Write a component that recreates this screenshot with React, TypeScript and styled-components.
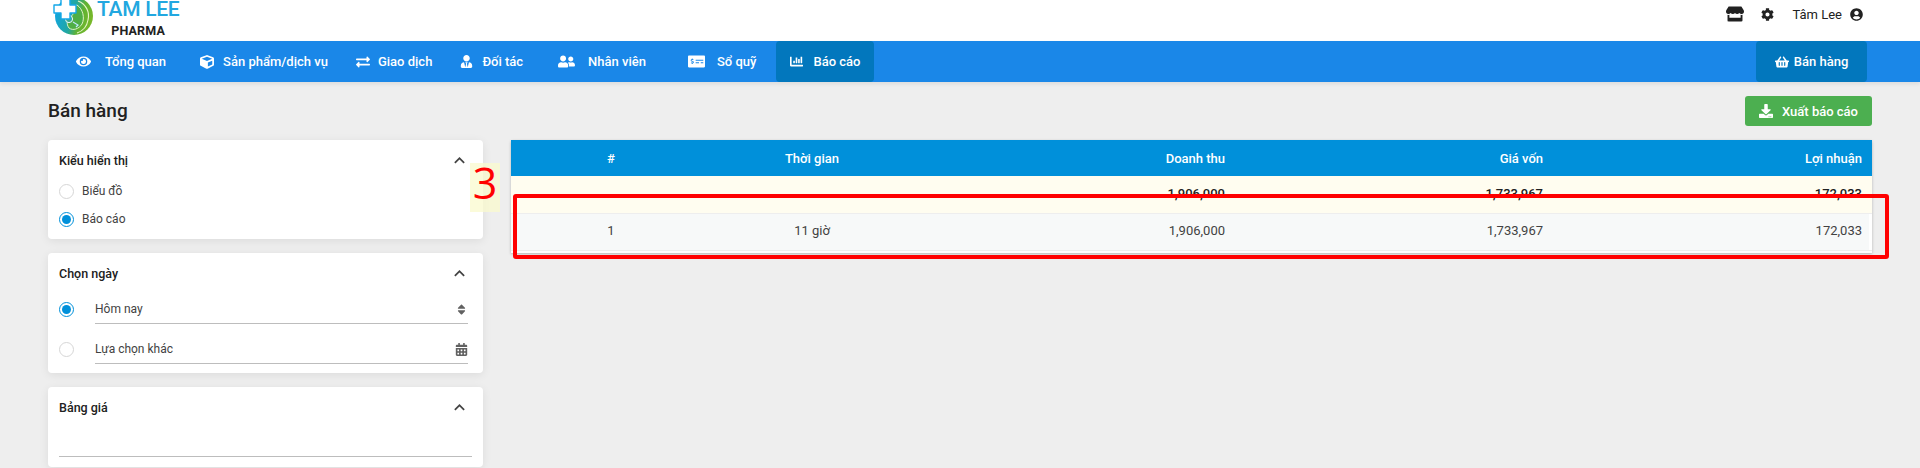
import React from "react";
import styled, { createGlobalStyle } from "styled-components";
import {
  FaEye, FaCube, FaExchangeAlt, FaUserTie, FaUserFriends, FaMoneyCheckAlt, FaChartBar,
  FaShoppingBasket, FaStore, FaCog, FaUserCircle, FaDownload, FaSort, FaCalendarAlt,
} from "react-icons/fa";
import { MdExpandLess } from "react-icons/md";

const Global = createGlobalStyle`
  html, body { margin: 0; padding: 0; height: 468px; overflow: hidden; background: #eeeeee; }
  * { box-sizing: border-box; }
  body { font-family: Roboto, "Liberation Sans", sans-serif; color: #212121; }
`;

const Page = styled.div`
  position: relative;
  width: 1920px;
  height: 468px;
  overflow: hidden;
`;

const TopBar = styled.header`
  height: 41px;
  background: #fff;
  display: flex;
  align-items: flex-start;
  justify-content: space-between;
  padding: 0 57px 0 53px;
  overflow: hidden;
`;

const Brand = styled.div`
  display: flex;
  align-items: flex-start;
  gap: 4px;
`;

const LogoMark = styled.svg`
  width: 40px;
  height: 36px;
  flex: none;
`;

const BrandText = styled.div`
  display: flex;
  flex-direction: column;
  align-items: center;
`;

const BrandName = styled.div`
  font-size: 21px;
  font-weight: 500;
  line-height: 18px;
  letter-spacing: -0.3px;
  color: #22a7e0;
  white-space: nowrap;
`;

const BrandSub = styled.div`
  font-size: 12.5px;
  font-weight: 700;
  line-height: 14px;
  margin-top: 6px;
  color: #222;
  letter-spacing: 0.2px;
`;

const UserArea = styled.div`
  height: 28px;
  display: flex;
  align-items: center;
  font-size: 13px;
  color: #212121;
`;

const StoreIcon = styled(FaStore)`
  font-size: 18px;
  margin-right: 17px;
`;

const CogIcon = styled(FaCog)`
  font-size: 13px;
  margin-right: 18px;
`;

const UserName = styled.span`
  margin-right: 8px;
`;

const NavBar = styled.nav`
  height: 41px;
  background: #1a87e8;
  display: flex;
  align-items: stretch;
  justify-content: space-between;
  padding: 0 53px 0 62px;
  box-shadow: 0 2px 4px rgba(0, 0, 0, 0.08);
  position: relative;
`;

const NavList = styled.div`
  display: flex;
  align-items: stretch;
`;

const NavItem = styled.a<{ $ml?: number; $gap: number; $active?: boolean }>`
  display: flex;
  align-items: center;
  gap: ${(p) => p.$gap}px;
  margin-left: ${(p) => p.$ml ?? 0}px;
  padding: 0 14px;
  color: #fff;
  font-size: 13px;
  font-weight: 500;
  white-space: nowrap;
  border-radius: 4px;
  background: ${(p) => (p.$active ? "#0277bd" : "transparent")};
  svg { flex: none; }
`;

const SellButton = styled.a`
  width: 111px;
  display: flex;
  align-items: center;
  justify-content: center;
  gap: 5px;
  color: #fff;
  font-size: 13px;
  font-weight: 500;
  border-radius: 4px;
  background: #0277bd;
`;

const Content = styled.main`
  padding: 14px 48px 0;
`;

const TitleRow = styled.div`
  height: 30px;
  display: flex;
  align-items: center;
  justify-content: space-between;
`;

const Title = styled.h1`
  margin: 0 0 2px;
  font-size: 19px;
  font-weight: 500;
  color: #212121;
`;

const ExportButton = styled.a`
  width: 127px;
  height: 30px;
  background: #4caf50;
  color: #fff;
  font-size: 13px;
  font-weight: 500;
  border-radius: 3px;
  display: flex;
  align-items: center;
  justify-content: center;
  gap: 9px;
`;

const Columns = styled.div`
  display: flex;
  gap: 28px;
  margin-top: 14px;
  align-items: flex-start;
`;

const Sidebar = styled.aside`
  width: 435px;
  flex: none;
  display: flex;
  flex-direction: column;
  gap: 14px;
`;

const Card = styled.section<{ $h: number }>`
  height: ${(p) => p.$h}px;
  background: #fff;
  border-radius: 4px;
  box-shadow: 0 2px 10px rgba(0, 0, 0, 0.08);
  padding: 11px 11px 0;
`;

const CardHead = styled.div`
  height: 18px;
  display: flex;
  align-items: center;
  justify-content: space-between;
  padding-right: 2px;
`;

const CardTitle = styled.h3`
  margin: 0;
  font-size: 12.5px;
  font-weight: 500;
  color: #212121;
`;

const Chevron = styled(MdExpandLess)`
  font-size: 21px;
  color: #424242;
`;

const RadioRow = styled.label`
  height: 28px;
  display: flex;
  align-items: center;
  gap: 8px;
  font-size: 12px;
  color: #424242;
`;

const RadioList = styled.div`
  margin-top: 8px;
`;

const Radio = styled.span<{ $on?: boolean }>`
  width: 15px;
  height: 15px;
  flex: none;
  border-radius: 50%;
  border: 1px solid ${(p) => (p.$on ? "#0090da" : "#d6d6d6")};
  display: flex;
  align-items: center;
  justify-content: center;
  &::after {
    content: "";
    width: 9px;
    height: 9px;
    border-radius: 50%;
    background: ${(p) => (p.$on ? "#0090da" : "transparent")};
  }
`;

const FieldRadio = styled(Radio)`
  margin-bottom: 7px;
`;

const FieldRow = styled.div`
  height: 40px;
  display: flex;
  align-items: flex-end;
  gap: 21px;
`;

const FieldList = styled.div`
  margin-top: 2px;
`;

const Field = styled.div`
  flex: 1;
  height: 29px;
  margin-right: 4px;
  border-bottom: 1px solid #bdbdbd;
  display: flex;
  align-items: center;
  justify-content: space-between;
  font-size: 12px;
  color: #424242;
  svg { color: #616161; font-size: 13px; }
`;

const EmptySelect = styled.div`
  height: 41px;
  border-bottom: 1px solid #bdbdbd;
`;

const TableCard = styled.div`
  width: 1361px;
  flex: none;
  height: 113px;
  background: #fff;
  border-radius: 2px 2px 0 0;
  box-shadow: 0 1px 3px rgba(0, 0, 0, 0.25);
`;

const Table = styled.table`
  width: 100%;
  border-collapse: collapse;
  table-layout: fixed;
  font-size: 13px;
`;

const HeadCell = styled.th<{ $align?: string }>`
  height: 36px;
  background: #0090da;
  color: #fff;
  font-weight: 500;
  padding: 0 10px;
  text-align: ${(p) => p.$align ?? "right"};
`;

const TotalCell = styled.td`
  height: 37px;
  background: #fffdf0;
  font-weight: 500;
  color: #212121;
  text-align: right;
  padding: 0 10px 2px;
  border-bottom: 1px solid #eee;
`;

const BodyCell = styled.td<{ $align?: string }>`
  height: 37px;
  background: #f7f9f9;
  color: #424242;
  text-align: ${(p) => p.$align ?? "right"};
  padding: 0 10px 2px;
  border-bottom: 1px solid #eee;
  &:last-child { box-shadow: inset -3px 0 0 #fff; }
`;

const NoteBadge = styled.div`
  position: absolute;
  left: 470px;
  top: 163px;
  width: 30px;
  height: 49px;
  background: rgba(250, 250, 205, 0.75);
  color: #ff0000;
  font-family: "Open Sans", sans-serif;
  font-size: 43px;
  line-height: 39px;
  text-align: center;
`;

const Highlight = styled.div`
  position: absolute;
  left: 513px;
  top: 194px;
  width: 1376px;
  height: 65px;
  border: 4px solid #ff0000;
  border-radius: 3px;
`;

const Logo = () => (
  <LogoMark viewBox="0 0 40 36">
    <defs>
      <linearGradient id="lg" x1="0" y1="0.2" x2="1" y2="0.5">
        <stop offset="0" stopColor="#0ea5ea" />
        <stop offset="0.5" stopColor="#22a7a0" />
        <stop offset="0.72" stopColor="#5fb232" />
        <stop offset="1" stopColor="#78b82a" />
      </linearGradient>
    </defs>
    <circle cx="21" cy="16" r="19" fill="url(#lg)" />
    <path d="M25 1c8 3 12 11 10 19-1 6-5 11-11 13" fill="none" stroke="#e6f5c8" strokeWidth="1.1" />
    <path d="M24 5c-3 1-5 4-4 8 0 2-1 3-3 4-3 2-4 7-1 11 4 3 10 1 13-4 3-6 1-15-5-19z" fill="#4fae46" stroke="#dff2c4" strokeWidth="1" />
    <circle cx="16" cy="19" r="3.6" fill="#3aa890" stroke="#eaf8ff" strokeWidth="1" />
    <path d="M20 22l5 3-2 2" fill="none" stroke="#bfe8ff" strokeWidth="1.2" />
    <path d="M1 5h7v-6h9v6h6v8h-6v6H8v-6H1z" fill="#fff" stroke="#15a8e8" strokeWidth="1.4" strokeLinejoin="round" />
  </LogoMark>
);

const rows = ["1,906,000", "1,733,967", "172,033"];

export default function App() {
  return (
    <Page>
      <Global />
      <TopBar>
        <Brand>
          <Logo />
          <BrandText>
            <BrandName>TAM LEE</BrandName>
            <BrandSub>PHARMA</BrandSub>
          </BrandText>
        </Brand>
        <UserArea>
          <StoreIcon />
          <CogIcon />
          <UserName>Tâm Lee</UserName>
          <FaUserCircle size={13} />
        </UserArea>
      </TopBar>
      <NavBar>
        <NavList>
          <NavItem $gap={14}><FaEye size={15} />Tổng quan</NavItem>
          <NavItem $ml={6} $gap={9}><FaCube size={14} />Sản phẩm/dịch vụ</NavItem>
          <NavItem $gap={8}><FaExchangeAlt size={14} />Giao dịch</NavItem>
          <NavItem $gap={9}><FaUserTie size={13} />Đối tác</NavItem>
          <NavItem $ml={7} $gap={13}><FaUserFriends size={17} />Nhân viên</NavItem>
          <NavItem $ml={14} $gap={12}><FaMoneyCheckAlt size={17} />Sổ quỹ</NavItem>
          <NavItem $ml={6} $gap={10} $active><FaChartBar size={13} />Báo cáo</NavItem>
        </NavList>
        <SellButton><FaShoppingBasket size={14} />Bán hàng</SellButton>
      </NavBar>
      <Content>
        <TitleRow>
          <Title>Bán hàng</Title>
          <ExportButton><FaDownload size={14} />Xuất báo cáo</ExportButton>
        </TitleRow>
        <Columns>
          <Sidebar>
            <Card $h={99}>
              <CardHead><CardTitle>Kiểu hiển thị</CardTitle><Chevron /></CardHead>
              <RadioList>
                <RadioRow><Radio />Biểu đồ</RadioRow>
                <RadioRow><Radio $on />Báo cáo</RadioRow>
              </RadioList>
            </Card>
            <Card $h={120}>
              <CardHead><CardTitle>Chọn ngày</CardTitle><Chevron /></CardHead>
              <FieldList>
                <FieldRow><FieldRadio $on /><Field>Hôm nay<FaSort /></Field></FieldRow>
                <FieldRow><FieldRadio /><Field>Lựa chọn khác<FaCalendarAlt /></Field></FieldRow>
              </FieldList>
            </Card>
            <Card $h={80}>
              <CardHead><CardTitle>Bảng giá</CardTitle><Chevron /></CardHead>
              <EmptySelect />
            </Card>
          </Sidebar>
          <TableCard>
            <Table>
              <colgroup>
                <col width="200" />
                <col width="202" />
                <col width="322" />
                <col width="318" />
                <col width="319" />
              </colgroup>
              <thead>
                <tr>
                  <HeadCell $align="center">#</HeadCell>
                  <HeadCell $align="center">Thời gian</HeadCell>
                  <HeadCell>Doanh thu</HeadCell>
                  <HeadCell>Giá vốn</HeadCell>
                  <HeadCell>Lợi nhuận</HeadCell>
                </tr>
              </thead>
              <tbody>
                <tr>
                  <TotalCell />
                  <TotalCell />
                  {rows.map((v) => <TotalCell key={v}>{v}</TotalCell>)}
                </tr>
                <tr>
                  <BodyCell $align="center">1</BodyCell>
                  <BodyCell $align="center">11 giờ</BodyCell>
                  {rows.map((v) => <BodyCell key={v}>{v}</BodyCell>)}
                </tr>
              </tbody>
            </Table>
          </TableCard>
        </Columns>
      </Content>
      <NoteBadge>3</NoteBadge>
      <Highlight />
    </Page>
  );
}
